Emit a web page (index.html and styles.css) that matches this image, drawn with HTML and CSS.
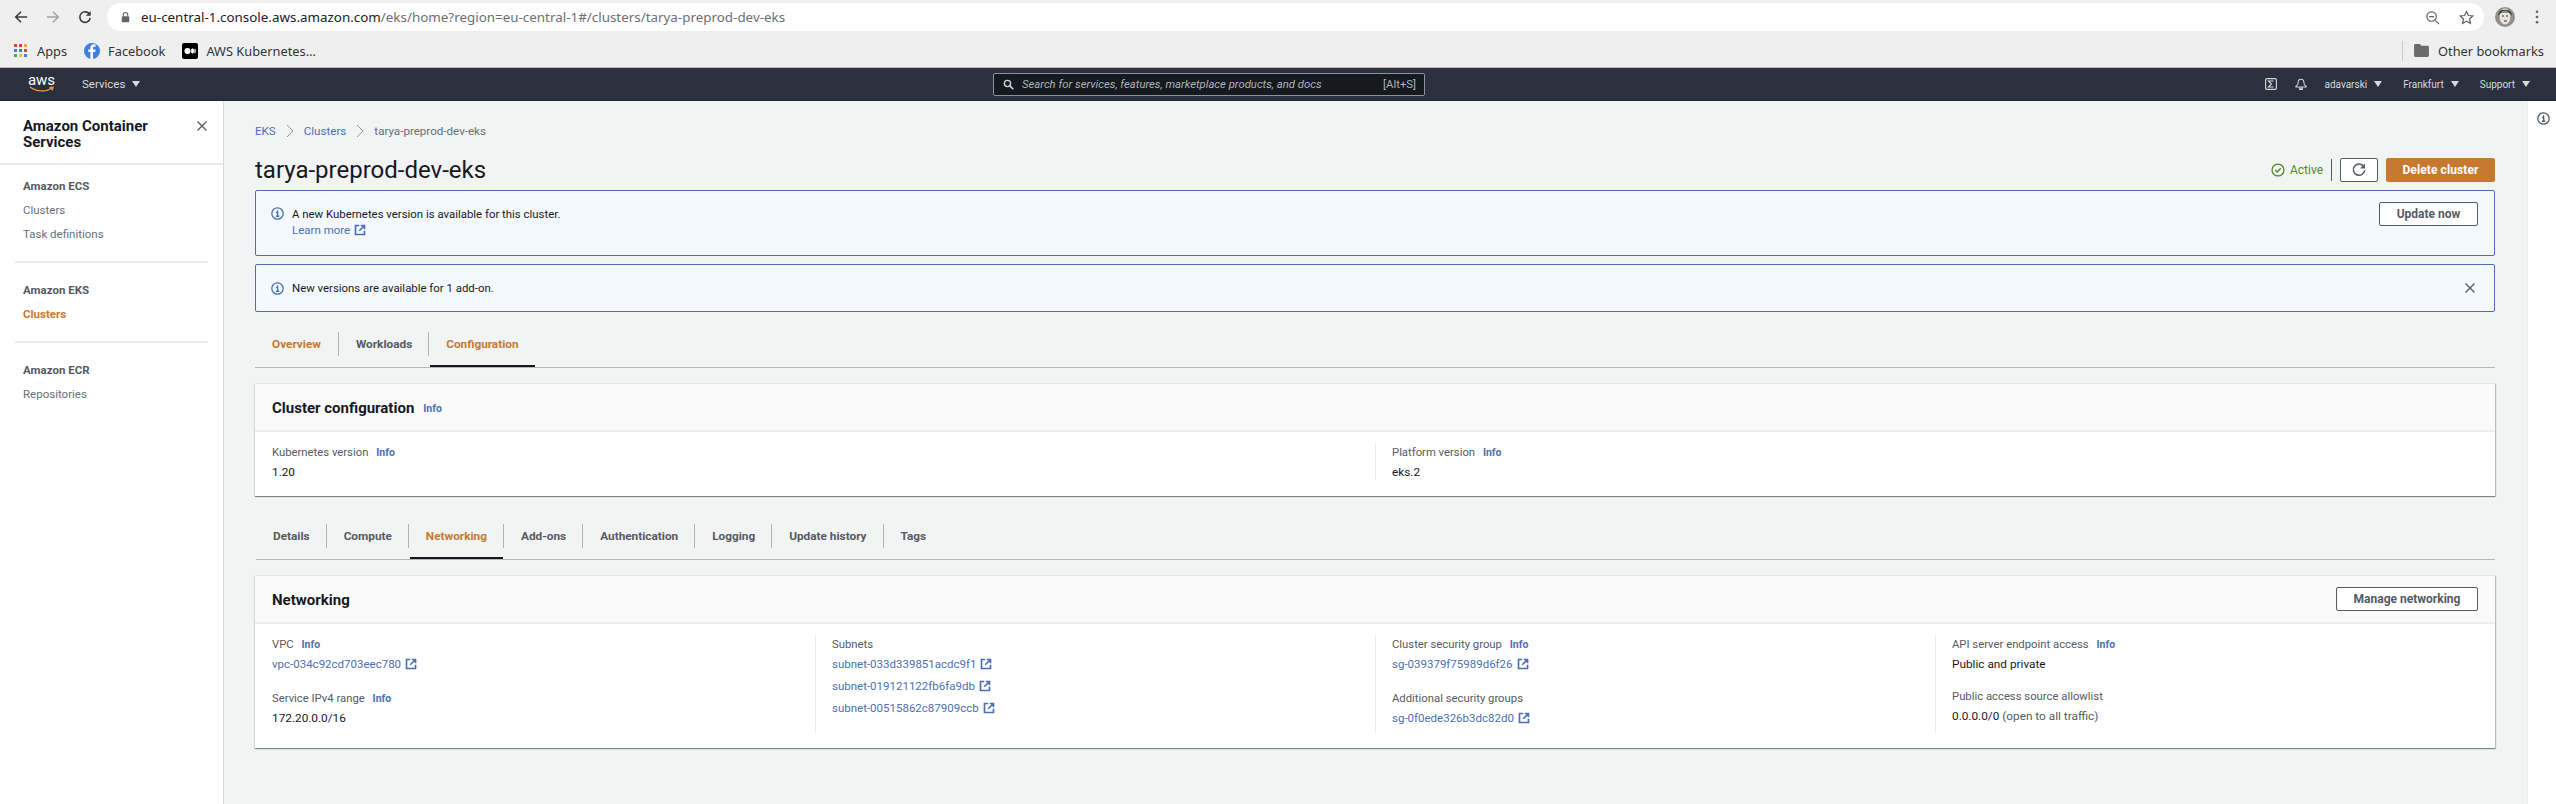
FILE: index.html
```html
<!DOCTYPE html>
<html lang="en">
<head>
<meta charset="utf-8">
<title>tarya-preprod-dev-eks</title>
<link rel="stylesheet" href="styles.css">
</head>
<body>
<svg class="defs" width="0" height="0" aria-hidden="true">
  <symbol id="ext" viewBox="0 0 16 16"><path d="M7 2H2v12h12V9M9 2h5v5M14 2L7 9" fill="none" stroke="currentColor" stroke-width="2.200"/></symbol>
  <symbol id="info" viewBox="0 0 16 16"><circle cx="8" cy="8" r="7" fill="none" stroke="currentColor" stroke-width="1.600"/><path d="M6 7h2.200v4.200M6 11.400h4.200M8 4v2" fill="none" stroke="currentColor" stroke-width="1.600"/></symbol>
  <symbol id="close" viewBox="0 0 16 16"><path d="M2 2l12 12M14 2L2 14" fill="none" stroke="currentColor" stroke-width="1.800"/></symbol>
</svg>

<header class="chrome">
  <div class="toolbar">
    <svg class="tb-icon back" viewBox="0 0 16 16"><path d="M15 8H2M8 2L2 8l6 6" fill="none" stroke="currentColor" stroke-width="1.800"/></svg>
    <svg class="tb-icon forward" viewBox="0 0 16 16"><path d="M1 8h13M8 2l6 6-6 6" fill="none" stroke="currentColor" stroke-width="1.800"/></svg>
    <svg class="tb-icon reload" viewBox="0 0 16 16"><path d="M13.500 5.500A6 6 0 1 0 14 9" fill="none" stroke="currentColor" stroke-width="1.800"/><path d="M14.500 1v5.500H9z" fill="currentColor"/></svg>
    <div class="omnibox">
      <svg class="lock" viewBox="0 0 12 14"><path d="M3 6V4a3 3 0 0 1 6 0v2" fill="none" stroke="currentColor" stroke-width="1.400"/><rect x="1" y="6" width="10" height="8" rx="1" fill="currentColor"/></svg>
      <span class="url"><span class="url-host">eu-central-1.console.aws.amazon.com</span>/eks/home?region=eu-central-1#/clusters/tarya-preprod-dev-eks</span>
      <svg class="omni-icon zoom-out" viewBox="0 0 16 16"><circle cx="7" cy="7" r="5" fill="none" stroke="currentColor" stroke-width="1.300"/><path d="M11 11l4 4M4.500 7h5" fill="none" stroke="currentColor" stroke-width="1.300"/></svg>
      <svg class="omni-icon star" viewBox="0 0 16 16"><path d="M8 1.500l2 4.400 4.700.5-3.500 3.200 1 4.700L8 11.900l-4.200 2.400 1-4.700L1.300 6.400 6 5.900z" fill="none" stroke="currentColor" stroke-width="1.300"/></svg>
    </div>
    <svg class="avatar" viewBox="0 0 20 20"><circle cx="10" cy="10" r="10" fill="#8f8f88"/><ellipse cx="10" cy="9.500" rx="5.500" ry="8" fill="#e3e2dc"/><path d="M4 7c1-5 11-5 12 0l-2-2H6zM7 9h2M11 9h2M9 14h3" fill="none" stroke="#3b3b38" stroke-width="1.200"/></svg>
    <svg class="kebab" viewBox="0 0 4 16"><circle cx="2" cy="2" r="1.500"/><circle cx="2" cy="8" r="1.500"/><circle cx="2" cy="14" r="1.500"/></svg>
  </div>
  <div class="bookmarks">
    <svg class="bm-apps" viewBox="0 0 13 13"><g fill="#d9453a"><rect width="3" height="3"/><rect x="5" width="3" height="3"/></g><rect x="10" width="3" height="3" fill="#e8a33a"/><g fill="#3f7fe0"><rect y="5" width="3" height="3"/><rect x="5" y="5" width="3" height="3"/></g><rect x="10" y="5" width="3" height="3" fill="#d9453a"/><rect y="10" width="3" height="3" fill="#4aa35a"/><rect x="5" y="10" width="3" height="3" fill="#e8c23a"/><rect x="10" y="10" width="3" height="3" fill="#3f7fe0"/></svg>
    <span class="bm-label bm-apps-label">Apps</span>
    <svg class="bm-fav" viewBox="0 0 16 16"><circle cx="8" cy="8" r="8" fill="#3f7fe0"/><path d="M9 16V9h2.200l.4-2.500H9V5c0-.8.3-1.200 1.200-1.200h1.400V1.500C11 1.400 10.400 1.300 9.700 1.300 7.700 1.300 6.400 2.500 6.400 4.700v1.800H4.300V9h2.100v7z" fill="#fff"/></svg>
    <span class="bm-label bm-fb-label">Facebook</span>
    <svg class="bm-fav" viewBox="0 0 16 16"><rect width="16" height="16" rx="2" fill="#000"/><circle cx="5.500" cy="8" r="3" fill="#fff"/><ellipse cx="10.500" cy="8" rx="1.500" ry="2.800" fill="#fff"/><ellipse cx="13" cy="8" rx=".7" ry="2.500" fill="#fff"/></svg>
    <span class="bm-label">AWS Kubernetes…</span>
    <span class="bm-spacer"></span>
    <span class="bm-rule"></span>
    <svg class="bm-folder" viewBox="0 0 16 14"><path d="M0 1.500C0 .7.700 0 1.500 0H6l2 2h6.500c.8 0 1.500.7 1.500 1.500v9c0 .8-.7 1.500-1.500 1.500h-13C.7 14 0 13.300 0 12.500z" fill="#6b6b6b"/></svg>
    <span class="bm-label">Other bookmarks</span>
  </div>
</header>

<nav class="topnav">
  <div class="aws-logo">
    <span class="aws-word">aws</span>
    <svg class="aws-smile" viewBox="0 0 26 7"><path d="M1 1c7 5 16 5 22 1" fill="none" stroke="#e8983a" stroke-width="1.500"/><path d="M20 1l5-.5-1.500 4.500z" fill="#e8983a"/></svg>
  </div>
  <span class="nav-item nav-services">Services<i class="caret"></i></span>
  <div class="search">
    <svg class="search-icon" viewBox="0 0 16 16"><circle cx="6.500" cy="6.500" r="4.500" fill="none" stroke="currentColor" stroke-width="2"/><path d="M10 10l5 5" fill="none" stroke="currentColor" stroke-width="2.200"/></svg>
    <span class="search-text">Search for services, features, marketplace products, and docs</span>
    <span class="search-key">[Alt+S]</span>
  </div>
  <svg class="nav-icon shell" viewBox="0 0 14 14"><rect x=".7" y=".7" width="12.600" height="12.600" rx="1.500" fill="none" stroke="currentColor" stroke-width="1.300"/><path d="M10 3.500H4l3.500 3.500L4 10.500h6" fill="none" stroke="currentColor" stroke-width="1.300"/></svg>
  <svg class="nav-icon bell" viewBox="0 0 14 14"><path d="M7 1.500c-2.500 0-3.500 2-3.500 4.500 0 1.500-1 3-2.500 3.500v1h12v-1C11.500 9 10.500 7.500 10.500 6 10.500 3.500 9.500 1.500 7 1.500zM5.500 12h3v1.500h-3z" fill="none" stroke="currentColor" stroke-width="1.200"/></svg>
  <span class="nav-item nav-user">adavarski<i class="caret"></i></span>
  <span class="nav-item nav-region">Frankfurt<i class="caret"></i></span>
  <span class="nav-item nav-support">Support<i class="caret"></i></span>
</nav>

<div class="layout">
  <aside class="sidebar">
    <div class="side-head">
      <h2 class="side-title">Amazon Container Services</h2>
      <svg class="side-close" viewBox="0 0 16 16"><use href="#close"/></svg>
    </div>
    <div class="side-section">
      <h3 class="side-h">Amazon ECS</h3>
      <a class="side-link">Clusters</a>
      <a class="side-link">Task definitions</a>
    </div>
    <div class="side-section">
      <h3 class="side-h">Amazon EKS</h3>
      <a class="side-link active">Clusters</a>
    </div>
    <div class="side-section last">
      <h3 class="side-h">Amazon ECR</h3>
      <a class="side-link">Repositories</a>
    </div>
  </aside>

  <main class="main">
    <div class="crumbs">
      <a class="crumb-link">EKS</a>
      <svg class="crumb-sep" viewBox="0 0 8 14"><path d="M1 1l6 6-6 6" fill="none" stroke="currentColor" stroke-width="1"/></svg>
      <a class="crumb-link">Clusters</a>
      <svg class="crumb-sep" viewBox="0 0 8 14"><path d="M1 1l6 6-6 6" fill="none" stroke="currentColor" stroke-width="1"/></svg>
      <span class="crumb-cur">tarya-preprod-dev-eks</span>
    </div>

    <div class="page-head">
      <h1 class="page-title">tarya-preprod-dev-eks</h1>
      <div class="page-actions">
        <span class="status">
          <svg class="status-icon" viewBox="0 0 16 16"><circle cx="8" cy="8" r="6.800" fill="none" stroke="currentColor" stroke-width="1.500"/><path d="M4.800 8l2.300 2.300 4-4.300" fill="none" stroke="currentColor" stroke-width="1.500"/></svg>
          Active
        </span>
        <span class="v-rule"></span>
        <button class="btn btn-icon"><svg class="refresh" viewBox="0 0 16 16"><path d="M13.500 4A6.500 6.500 0 1 0 14.500 8.500" fill="none" stroke="currentColor" stroke-width="1.700"/><path d="M14.800 .7v5.600H9.200z" fill="currentColor"/></svg></button>
        <button class="btn btn-primary">Delete cluster</button>
      </div>
    </div>

    <section class="alert alert-tall">
      <svg class="alert-icon" viewBox="0 0 16 16"><use href="#info"/></svg>
      <div class="alert-body">
        <div>A new Kubernetes version is available for this cluster.</div>
        <a class="link">Learn more<svg class="ext ext-learn" viewBox="0 0 16 16"><use href="#ext"/></svg></a>
      </div>
      <button class="btn btn-update">Update now</button>
    </section>
    <section class="alert alert-short">
      <svg class="alert-icon" viewBox="0 0 16 16"><use href="#info"/></svg>
      <div class="alert-body">New versions are available for 1 add-on.</div>
      <svg class="alert-close" viewBox="0 0 16 16"><use href="#close"/></svg>
    </section>

    <div class="tabs tabs-top">
      <a class="tab orange">Overview</a>
      <a class="tab">Workloads</a>
      <a class="tab orange current">Configuration</a>
    </div>

    <section class="card card-config">
      <div class="card-head">
        <h2 class="card-title">Cluster configuration</h2>
        <a class="info info-head">Info</a>
      </div>
      <div class="config-grid">
        <div class="cell">
          <div class="label">Kubernetes version <a class="info">Info</a></div>
          <div class="value">1.20</div>
        </div>
        <div class="cell ruled">
          <div class="label">Platform version <a class="info">Info</a></div>
          <div class="value">eks.2</div>
        </div>
      </div>
    </section>

    <div class="tabs tabs-second">
      <a class="tab">Details</a>
      <a class="tab">Compute</a>
      <a class="tab orange current">Networking</a>
      <a class="tab">Add-ons</a>
      <a class="tab">Authentication</a>
      <a class="tab">Logging</a>
      <a class="tab">Update history</a>
      <a class="tab">Tags</a>
    </div>

    <section class="card card-net">
      <div class="card-head spread">
        <h2 class="card-title">Networking</h2>
        <button class="btn btn-manage">Manage networking</button>
      </div>
      <div class="net-grid">
        <div class="cell">
          <div class="label">VPC <a class="info">Info</a></div>
          <a class="link row">vpc-034c92cd703eec780<svg class="ext" viewBox="0 0 16 16"><use href="#ext"/></svg></a>
          <div class="label gap">Service IPv4 range <a class="info">Info</a></div>
          <div class="value">172.20.0.0/16</div>
        </div>
        <div class="cell ruled">
          <div class="label">Subnets</div>
          <a class="link row">subnet-033d339851acdc9f1<svg class="ext" viewBox="0 0 16 16"><use href="#ext"/></svg></a>
          <a class="link row tight">subnet-019121122fb6fa9db<svg class="ext" viewBox="0 0 16 16"><use href="#ext"/></svg></a>
          <a class="link row tight">subnet-00515862c87909ccb<svg class="ext" viewBox="0 0 16 16"><use href="#ext"/></svg></a>
        </div>
        <div class="cell ruled">
          <div class="label">Cluster security group <a class="info">Info</a></div>
          <a class="link row">sg-039379f75989d6f26<svg class="ext" viewBox="0 0 16 16"><use href="#ext"/></svg></a>
          <div class="label gap">Additional security groups</div>
          <a class="link row">sg-0f0ede326b3dc82d0<svg class="ext" viewBox="0 0 16 16"><use href="#ext"/></svg></a>
        </div>
        <div class="cell ruled">
          <div class="label">API server endpoint access <a class="info">Info</a></div>
          <div class="value">Public and private</div>
          <div class="label gap-small">Public access source allowlist</div>
          <div class="value">0.0.0.0/0 <span class="muted">(open to all traffic)</span></div>
        </div>
      </div>
    </section>
  </main>
  <aside class="rail">
    <svg class="rail-info" viewBox="0 0 16 16"><use href="#info"/></svg>
  </aside>
</div>
</body>
</html>
```

FILE: styles.css
```css
* { box-sizing: border-box; }
html, body { margin: 0; padding: 0; }
body {
  width: 2556px;
  height: 804px;
  overflow: hidden;
  background: #f2f3f3;
  color: #16191f;
  font-family: Roboto, "Liberation Sans", sans-serif;
  font-size: 12px;
}
.defs { display: block; height: 0; }
h1, h2, h3 { margin: 0; }
button { font-family: inherit; cursor: pointer; }

/* browser chrome */
.chrome { height: 68px; background: #efefef; border-bottom: 1px solid #b9b9b9; font-family: "Noto Sans", sans-serif; }
.toolbar { height: 34px; display: flex; align-items: center; padding-left: 14px; }
.tb-icon { width: 14px; height: 14px; margin-right: 18px; color: #3c3c3c; flex: none; }
.forward { color: #a3a3a3; }
.reload { margin-right: 15px; }
.omnibox { width: 2377px; height: 28px; background: #fff; border-radius: 14px; display: flex; align-items: center; padding: 0 10px 0 14px; flex: none; }
.lock { width: 9px; height: 12px; color: #5f6368; margin-right: 11px; }
.url { flex: 1; font-size: 13.4px; color: #6b6f73; white-space: nowrap; }
.url-host { color: #202124; }
.omni-icon { width: 15px; height: 15px; color: #5f6368; }
.zoom-out { margin-right: 19px; }
.avatar { width: 20px; height: 20px; margin-left: 11px; flex: none; }
.kebab { width: 4px; height: 14px; margin-left: 20px; fill: #5f6368; flex: none; }
.bookmarks { height: 33px; display: flex; align-items: center; padding-left: 14px; padding-right: 12px; }
.bm-label { font-size: 12.800px; color: #333; white-space: nowrap; }
.bm-apps { width: 13px; height: 13px; margin-right: 10px; }
.bm-apps-label { margin-right: 17px; }
.bm-fb-label { margin-right: 17px; }
.bm-fav { width: 16px; height: 16px; margin-right: 8px; }
.bm-spacer { flex: 1; }
.bm-rule { width: 1px; height: 20px; background: #c9c9c9; margin-right: 11px; }
.bm-folder { width: 15px; height: 13px; margin-right: 9px; }

/* AWS top navigation */
.topnav { height: 33px; background: #2a303e; color: #d5dbdb; display: flex; align-items: center; padding-left: 28px; font-size: 10px; position: relative; border-bottom: 1px solid #20252f; }
.aws-logo { width: 27px; height: 24px; display: flex; flex-direction: column; align-items: center; margin-right: 27px; }
.aws-word { font-size: 15px; line-height: 16px; color: #fff; }
.aws-smile { width: 26px; height: 7px; margin-top: -2px; }
.nav-item { display: inline-flex; align-items: center; white-space: nowrap; margin-right: 21px; }
.caret { width: 0; height: 0; border: 4px solid transparent; border-top: 6px solid #d5dbdb; border-bottom: 0; margin-left: 7px; }
.nav-services { margin-right: 0; font-size: 11.500px; }
.nav-support { margin-right: 26px; }
.search { position: absolute; left: 993px; top: 5px; width: 432px; height: 23px; background: #16191f; border: 1px solid #8d9499; border-radius: 2px; display: flex; align-items: center; padding: 0 8px 0 9px; color: #aab7b8; font-size: 11.300px; font-style: italic; }
.search-icon { width: 11px; height: 11px; margin-right: 8px; color: #d5dbdb; }
.search-text { flex: 1; white-space: nowrap; }
.search-key { font-style: normal; }
.nav-icon { width: 12px; height: 12px; color: #d5dbdb; }
.shell { margin-left: auto; margin-right: 18px; }
.bell { margin-right: 17px; }

/* layout */
.layout { display: flex; height: 703px; }
.sidebar { width: 224px; background: #fff; border-right: 1px solid #d5dbdb; flex: none; }
.rail { width: 29px; background: #fff; border-left: 1px solid #eaeded; flex: none; padding: 11px 0 0 9px; color: #545b64; }
.rail-info { width: 13px; height: 13px; display: block; }
.side-head { height: 64px; padding: 17px 16px 0 23px; border-bottom: 2px solid #eaeded; display: flex; justify-content: space-between; align-items: flex-start; }
.side-title { width: 150px; font-size: 15px; line-height: 16px; font-weight: 700; }
.side-close { width: 12px; height: 12px; margin-top: 2px; margin-right: -1px; color: #545b64; }
.side-section { margin: 0 15px; padding: 9px 8px 15px; border-bottom: 2px solid #eaeded; }
.side-section + .side-section { padding-top: 15px; }
.side-section.last { border-bottom: 0; }
.side-h { font-size: 11.500px; line-height: 24px; font-weight: 700; color: #545b64; }
.side-link { display: block; font-size: 11.500px; line-height: 24px; color: #687078; }
.side-link.active { color: #c7792f; font-weight: 700; }

/* main */
.main { flex: 1; padding: 20px 32px 0 31px; min-width: 0; }
.crumbs { display: flex; align-items: center; height: 20px; font-size: 11.600px; }
.crumb-link { color: #4d6fb4; }
.crumb-sep { width: 8px; height: 14px; margin: 0 10px; color: #879596; }
.crumb-cur { color: #687078; }
.page-head { display: flex; justify-content: space-between; align-items: center; height: 32px; margin-top: 13px; }
.page-title { font-size: 24px; line-height: 32px; font-weight: 400; }
.page-actions { display: flex; align-items: center; }
.status { display: inline-flex; align-items: center; color: #4f8a2c; font-size: 12px; margin-right: 8px; }
.status-icon { width: 14px; height: 14px; margin-right: 5px; }
.v-rule { width: 1px; height: 22px; background: #545b64; margin-right: 8px; }
.btn { height: 24px; background: #fff; border: 1px solid #545b64; border-radius: 2px; color: #545b64; font-size: 12px; font-weight: 700; padding: 0; display: inline-flex; align-items: center; justify-content: center; }
.btn-icon { width: 38px; margin-right: 8px; }
.refresh { width: 14px; height: 14px; }
.btn-primary { width: 109px; background: #c7792f; border-color: #c7792f; color: #fff; letter-spacing: .1px; }
.btn-update { width: 99px; }
.btn-manage { width: 142px; }

.alert { display: flex; background: #f4f9fe; border: 1px solid #4a6fb5; border-radius: 2px; padding: 0 16px 0 15px; font-size: 11.400px; }
.alert-tall { height: 66px; margin-top: 4px; padding-top: 11px; }
.alert-short { height: 48px; margin-top: 8px; align-items: center; }
.alert-icon { width: 13px; height: 13px; color: #4a6fb5; flex: none; margin-right: 8px; }
.alert-tall .alert-icon { margin-top: 5px; }
.alert-body { flex: 1; line-height: 16px; color: #16191f; }
.alert-tall .alert-body { line-height: 16px; padding-top: 4px; }
.alert-close { width: 12px; height: 12px; color: #545b64; margin-right: 2px; }
.link { color: #4d6fb4; display: inline-flex; align-items: center; white-space: nowrap; font-size: 11.500px; }
.ext { width: 12px; height: 12px; margin-left: 4px; flex: none; color: #4a6fb5; }

.tabs { display: flex; align-items: center; height: 24px; box-sizing: content-box; padding: 20px 0 11px; border-bottom: 1px solid #b4b8b8; font-size: 11.800px; font-weight: 700; color: #545b64; }
.tab { position: relative; height: 24px; line-height: 24px; padding: 0 16px 0 17px; border-right: 1px solid #aab7b8; white-space: nowrap; }
.tab:last-child { border-right: 0; }
.tab.orange { color: #c7792f; }
.tab.current::after { content: ""; position: absolute; left: 1px; right: 0; bottom: -11px; height: 2px; background: #16191f; }
.tabs-top .tab:first-child { padding-right: 17px; }
.tabs-second { margin-left: 1px; padding-top: 27px; }

/* cards */
.card { background: #fff; margin-top: 16px; border-bottom: 1px solid #7c8487; box-shadow: 1px 0 1px rgba(0, 28, 36, .25), -1px 0 1px rgba(0, 28, 36, .12); }
.card-head { height: 48px; background: #fafafa; border-bottom: 2px solid #eaeded; display: flex; align-items: center; padding: 0 17px; }
.spread { justify-content: space-between; }
.card-title { font-size: 15px; font-weight: 700; padding-top: 1px; }
.info { color: #4d6fb4; font-size: 10.500px; font-weight: 700; margin-left: 5px; }
.info-head { margin-left: 9px; margin-top: 3px; }
.config-grid { height: 64px; display: grid; grid-template-columns: 1fr 1fr; padding-top: 12px; }
.net-grid { height: 124px; display: grid; grid-template-columns: repeat(4, 1fr); padding-top: 12px; }
.cell { padding: 0 17px; height: 96px; }
.config-grid .cell { height: 36px; }
.ruled { border-left: 1px solid #eaeded; padding-left: 16px; }
.label { line-height: 16px; padding-top: 1px; color: #545b64; font-size: 11.300px; white-space: nowrap; box-sizing: content-box; }
.value { line-height: 16px; margin-top: 3px; font-size: 11.800px; }
.muted { color: #545b64; }
.row { display: flex; height: 16px; margin-top: 3px; line-height: 16px; }
.tight { margin-top: 6px; }
.gap { margin-top: 18px; }
.gap-small { margin-top: 16px; }
```
